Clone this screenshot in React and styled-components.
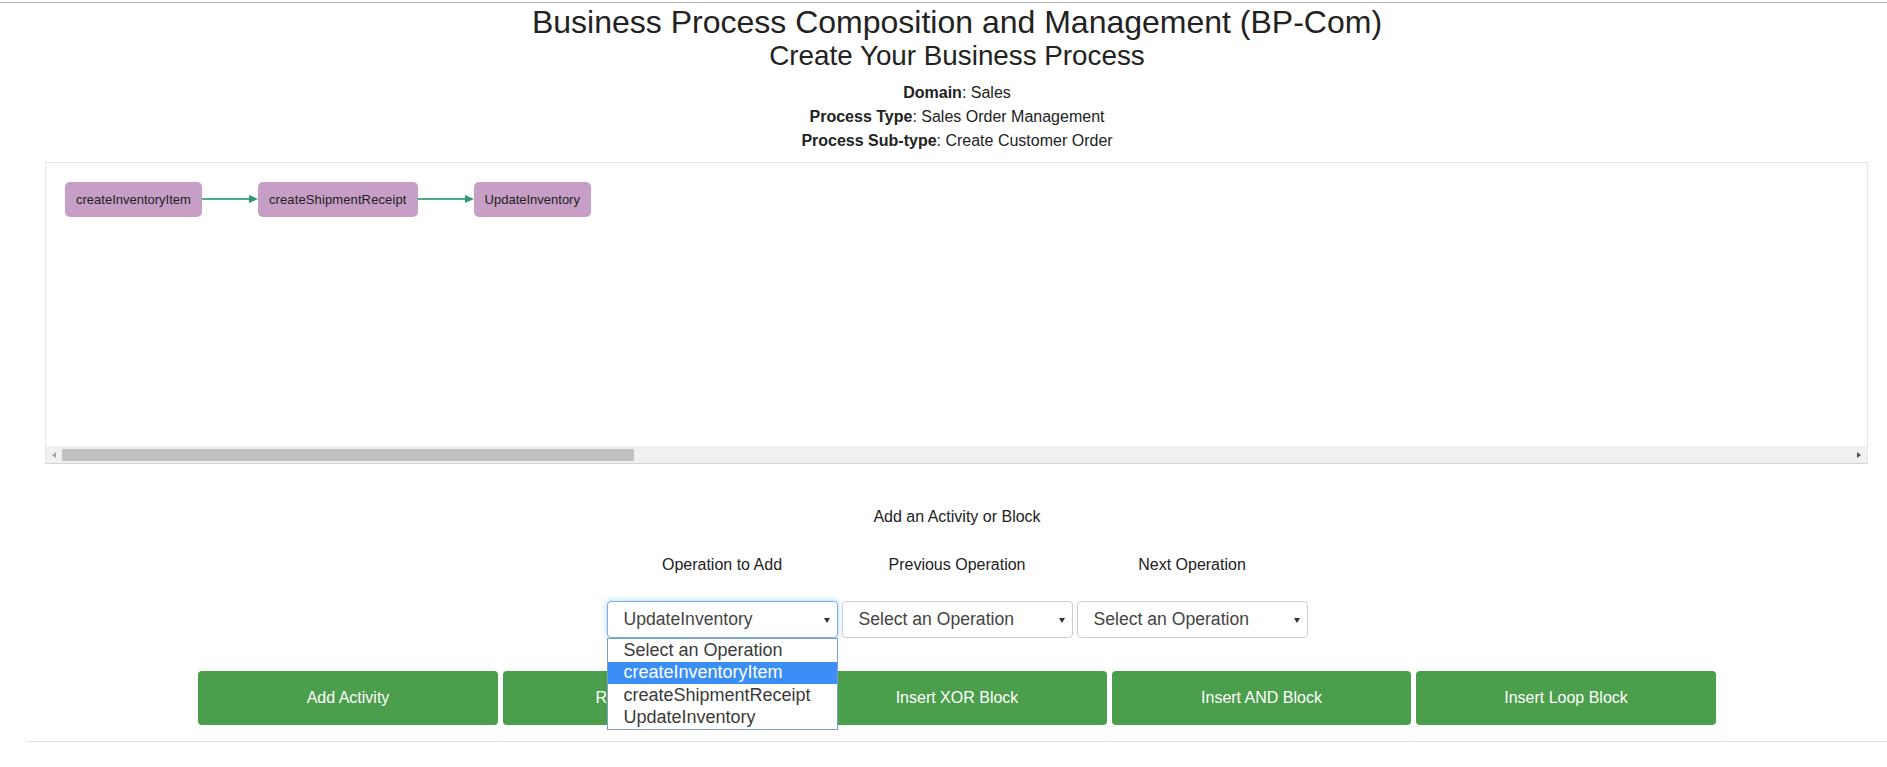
import React from "react";
import styled, { createGlobalStyle } from "styled-components";

const GlobalStyle = createGlobalStyle`
  html, body { margin: 0; padding: 0; background: #fff; }
  body {
    font-family: "Liberation Sans", Arial, sans-serif;
    color: #333;
    font-size: 16px;
  }
  * { box-sizing: border-box; }
`;

const TopRule = styled.div`
  height: 1px;
  margin-top: 2px;
  background: #b4b4b4;
`;

const Page = styled.div`
  padding-left: 27px;
  display: flex;
  flex-direction: column;
`;

const Header = styled.header`
  text-align: center;
`;

const Title = styled.h1`
  margin: 1px 0 0;
  font-size: 32px;
  line-height: 36px;
  font-weight: 400;
  color: #222;
`;

const Subtitle = styled.h2`
  margin: 0;
  font-size: 27.8px;
  line-height: 32px;
  font-weight: 400;
  color: #222;
`;

const InfoList = styled.div`
  margin-top: 9px;
  display: flex;
  flex-direction: column;
  align-items: center;
`;

const InfoLine = styled.div`
  font-size: 16px;
  line-height: 24px;
  color: #222;
  b { font-weight: 700; }
`;

const Canvas = styled.div`
  margin: 9px 19px 0 18px;
  height: 302px;
  border: 1px solid #e6e6e6;
  border-bottom-color: #d4d4d4;
  background: #fff;
  display: flex;
  flex-direction: column;
  overflow: hidden;
`;

const Diagram = styled.div`
  flex: 1;
  padding: 19px 0 0 19px;
  display: flex;
  align-items: flex-start;
  overflow: hidden;
`;

const NodeRow = styled.div`
  display: flex;
  align-items: center;
`;

const Node = styled.div`
  height: 35px;
  padding: 0 11px;
  display: flex;
  align-items: center;
  background: #c69ec6;
  border-radius: 5px;
  font-size: 13px;
  color: #222;
  white-space: nowrap;
  letter-spacing: ${(p) => p.$spacing || 0}px;
`;

const ArrowSvg = styled.svg`
  display: block;
  flex: none;
  margin-top: -2px;
`;

const Arrow = () => (
  <ArrowSvg width="56" height="12" viewBox="0 0 56 12">
    <line x1="0" y1="6" x2="49" y2="6" stroke="#4aab84" strokeWidth="2.2" />
    <polygon points="47,2 56,6 47,10" fill="#2f9a70" />
  </ArrowSvg>
);

const ScrollBar = styled.div`
  flex: none;
  height: 17px;
  background: #f1f1f1;
  display: flex;
  align-items: stretch;
`;

const ScrollButton = styled.div`
  flex: none;
  width: 16px;
  display: flex;
  align-items: center;
  justify-content: center;
  &::before {
    content: "";
    width: 0;
    height: 0;
    border-top: 3.5px solid transparent;
    border-bottom: 3.5px solid transparent;
    ${(p) =>
      p.$dir === "left"
        ? "border-right: 4px solid #a3a3a3;"
        : "border-left: 4px solid #505050;"}
  }
`;

const Track = styled.div`
  flex: 1;
  padding: 3px 0 2px;
  display: flex;
`;

const Thumb = styled.div`
  width: ${(p) => p.$size}px;
  background: #c1c1c1;
`;

const SectionTitle = styled.div`
  margin-top: 41px;
  text-align: center;
  font-size: 16px;
  line-height: 24px;
  color: #222;
`;

const Controls = styled.div`
  margin-top: 24px;
  display: flex;
  justify-content: center;
`;

const Column = styled.div`
  width: 235px;
  padding: 0 2px;
  display: flex;
  flex-direction: column;
  align-items: stretch;
  gap: 24px;
`;

const FieldLabel = styled.div`
  text-align: center;
  font-size: 16px;
  line-height: 24px;
  color: #222;
`;

const SelectWrap = styled.div`
  position: relative;
  height: 37px;
  &::after {
    content: "";
    position: absolute;
    right: 8px;
    top: 17px;
    border-left: 3px solid transparent;
    border-right: 3px solid transparent;
    border-top: 5px solid #333;
    pointer-events: none;
  }
`;

const FakeSelect = styled.div`
  height: 37px;
  padding-left: 16px;
  display: flex;
  align-items: center;
  border: 1px solid ${(p) => (p.$focused ? "#7aaee8" : "#cfcfcf")};
  border-radius: 4px;
  background: #fff;
  font-size: 17.6px;
  color: #444;
  box-shadow: ${(p) =>
    p.$focused ? "0 0 6px rgba(102,175,233,0.55)" : "none"};
`;

const Menu = styled.div`
  position: absolute;
  top: 100%;
  left: 0;
  right: 0;
  z-index: 5;
  background: #fff;
  border: 1px solid #7f9ccf;
  display: flex;
  flex-direction: column;
`;

const MenuItem = styled.div`
  height: 22.5px;
  padding-left: 16px;
  display: flex;
  align-items: center;
  font-size: 18px;
  color: ${(p) => (p.$active ? "#fff" : "#3a3a3a")};
  background: ${(p) => (p.$active ? "#3a8ef5" : "#fff")};
  white-space: nowrap;
`;

const ButtonRow = styled.div`
  margin-top: 33px;
  display: flex;
  justify-content: center;
  gap: 5px;
`;

const ActionButton = styled.button`
  width: 299.5px;
  height: 54px;
  border: none;
  border-radius: 4px;
  background: #4b9e4b;
  color: #fff;
  font-family: "Liberation Sans", Arial, sans-serif;
  font-size: 16px;
  cursor: pointer;
`;

const BottomRule = styled.hr`
  margin: 16px 0 0;
  border: none;
  border-top: 1px solid #e3e3e3;
`;

const options = [
  "Select an Operation",
  "createInventoryItem",
  "createShipmentReceipt",
  "UpdateInventory",
];

const columns = [
  { label: "Operation to Add", value: "UpdateInventory", open: true },
  { label: "Previous Operation", value: "Select an Operation" },
  { label: "Next Operation", value: "Select an Operation" },
];

const nodes = [
  { name: "createInventoryItem", spacing: 0 },
  { name: "createShipmentReceipt", spacing: 0.12 },
  { name: "UpdateInventory", spacing: 0 },
];

const buttons = [
  "Add Activity",
  "Remove Activity",
  "Insert XOR Block",
  "Insert AND Block",
  "Insert Loop Block",
];

export default function App() {
  return (
    <>
      <GlobalStyle />
      <TopRule />
      <Page>
        <Header>
          <Title>Business Process Composition and Management (BP-Com)</Title>
          <Subtitle>Create Your Business Process</Subtitle>
          <InfoList>
            <InfoLine>
              <b>Domain</b>: Sales
            </InfoLine>
            <InfoLine>
              <b>Process Type</b>: Sales Order Management
            </InfoLine>
            <InfoLine>
              <b>Process Sub-type</b>: Create Customer Order
            </InfoLine>
          </InfoList>
        </Header>

        <Canvas>
          <Diagram>
            <NodeRow>
              {nodes.map((n, i) => (
                <React.Fragment key={n.name}>
                  {i > 0 && <Arrow />}
                  <Node $spacing={n.spacing}>{n.name}</Node>
                </React.Fragment>
              ))}
            </NodeRow>
          </Diagram>
          <ScrollBar>
            <ScrollButton $dir="left" />
            <Track>
              <Thumb $size={572} />
            </Track>
            <ScrollButton $dir="right" />
          </ScrollBar>
        </Canvas>

        <SectionTitle>Add an Activity or Block</SectionTitle>

        <Controls>
          {columns.map((c) => (
            <Column key={c.label}>
              <FieldLabel>{c.label}</FieldLabel>
              <SelectWrap>
                <FakeSelect $focused={c.open}>{c.value}</FakeSelect>
                {c.open && (
                  <Menu>
                    {options.map((o) => (
                      <MenuItem key={o} $active={o === "createInventoryItem"}>
                        {o}
                      </MenuItem>
                    ))}
                  </Menu>
                )}
              </SelectWrap>
            </Column>
          ))}
        </Controls>

        <ButtonRow>
          {buttons.map((b) => (
            <ActionButton key={b}>{b}</ActionButton>
          ))}
        </ButtonRow>

        <BottomRule />
      </Page>
    </>
  );
}
